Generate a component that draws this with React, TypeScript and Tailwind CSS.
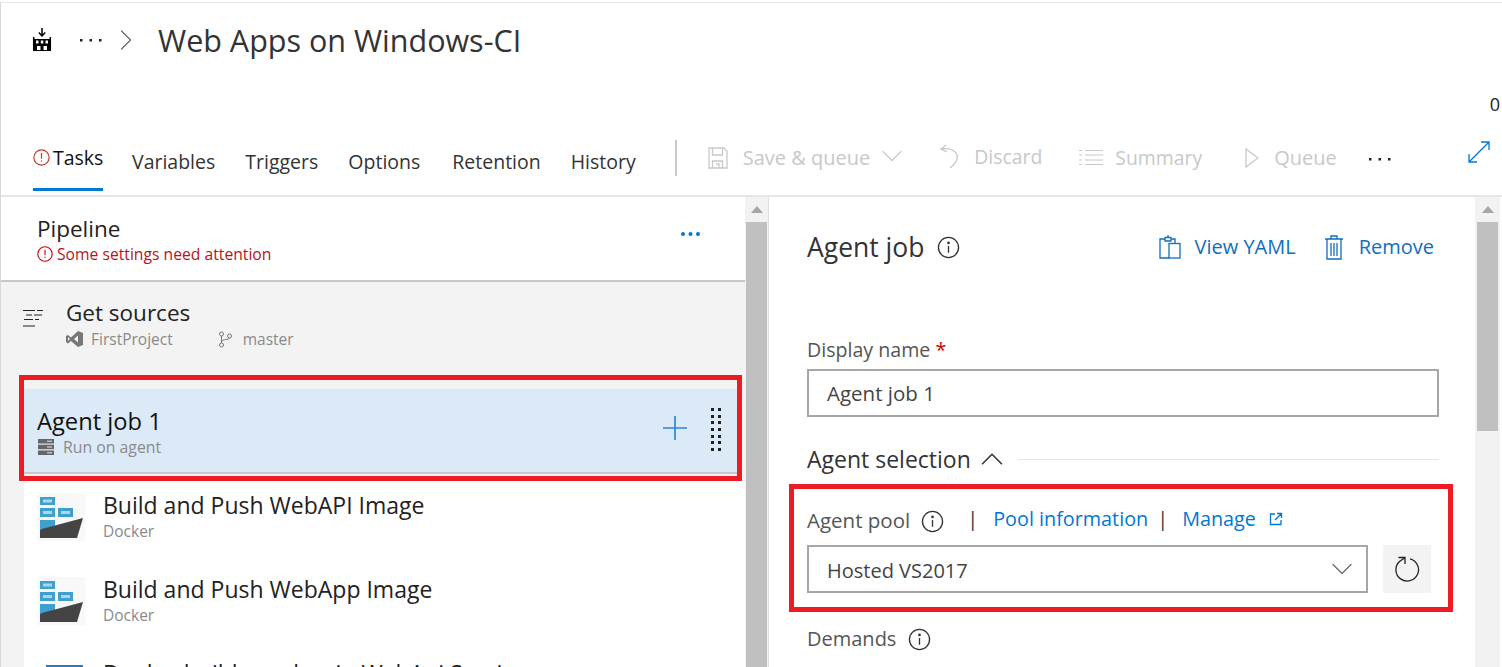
import { ChevronDown, ChevronUp, ChevronRight } from "lucide-react";

const font = { fontFamily: '"Open Sans", "Noto Sans", sans-serif' };

function Dots({ color = "#222" }: { color?: string }) {
  return (
    <svg width="24" height="6" viewBox="0 0 24 6" fill={color} className="shrink-0">
      <rect x="1" y="2" width="2.500" height="2.500" />
      <rect x="10.500" y="2" width="2.500" height="2.500" />
      <rect x="20" y="2" width="2.500" height="2.500" />
    </svg>
  );
}

function InfoIcon({ size = 23 }: { size?: number }) {
  return (
    <svg width={size} height={size} viewBox="0 0 24 24" fill="none" stroke="#333" strokeWidth="1.400" className="shrink-0">
      <circle cx="12" cy="12" r="10.500" />
      <path d="M12 10.500v7" />
      <circle cx="12" cy="7.200" r="0.700" fill="#333" />
    </svg>
  );
}

function WarnIcon({ size = 16, color = "#c00" }: { size?: number; color?: string }) {
  return (
    <svg width={size} height={size} viewBox="0 0 16 16" fill="none" stroke={color} strokeWidth="1.100" className="shrink-0">
      <circle cx="8" cy="8" r="7.200" />
      <path d="M8 3.800v5.400M8 10.800v1.200" />
    </svg>
  );
}

function BuildLogo() {
  return (
    <svg width="20" height="24" viewBox="0 0 20 24" className="shrink-0">
      <path d="M10 0v7.500M6.800 4.500l3.200 3.500 3.200-3.500" fill="none" stroke="#000" strokeWidth="1.500" />
      <path d="M1.700 9v13M18.300 9v13" stroke="#000" strokeWidth="1.500" />
      <rect x="1" y="11" width="18" height="12" fill="#000" />
      <rect x="4" y="12.500" width="2.500" height="3" fill="#fff" />
      <rect x="8.800" y="12.500" width="2.500" height="3" fill="#fff" />
      <rect x="13.500" y="12.500" width="2.500" height="3" fill="#fff" />
      <rect x="5" y="18" width="3.500" height="4" fill="#fff" />
      <rect x="11.500" y="18" width="3.500" height="4" fill="#fff" />
    </svg>
  );
}

function DockerIcon() {
  return (
    <svg width="48" height="48" viewBox="0 0 48 48" className="shrink-0">
      <rect width="48" height="48" fill="#f8f8f8" />
      <g fill="#3f9fcf">
        <rect x="3" y="4" width="15" height="8" />
        <rect x="3" y="15" width="15" height="9" />
        <rect x="21" y="15" width="15" height="9" />
        <rect x="3" y="27" width="15" height="9" />
      </g>
      <g fill="#a9d8ef">
        <rect x="6" y="6.500" width="9" height="3" />
        <rect x="6" y="18" width="9" height="3" />
        <rect x="24" y="18" width="9" height="3" />
      </g>
      <path d="M3 36.500 46 25l-6 20H3z" fill="#444" />
    </svg>
  );
}

function DeployIcon() {
  return (
    <svg width="48" height="48" viewBox="0 0 48 48" className="shrink-0">
      <rect x="9" y="4" width="37" height="40" fill="#2b78c8" />
    </svg>
  );
}

function GetSourcesIcon() {
  return (
    <svg width="22" height="19" viewBox="0 0 22 19" stroke="#222" strokeWidth="1.200" className="shrink-0">
      <path d="M1 1.500h12M15 1.500h6M4 6h6M12 6h8M2 10.500h9M13 10.500h4M1 17h12" />
    </svg>
  );
}

function VsIcon() {
  return (
    <svg width="17" height="16" viewBox="0 0 17 16" fill="#777" className="shrink-0">
      <path d="M12 0l5 2v12l-5 2-7-6-3 2.500L0 11V5l2-1 3 2.500zM12 4.500 8 8l4 3.500zM2 6v4l2-2z" fillRule="evenodd" />
    </svg>
  );
}

function BranchIcon() {
  return (
    <svg width="15" height="17" viewBox="0 0 15 17" fill="none" stroke="#777" strokeWidth="1" className="shrink-0">
      <circle cx="3.500" cy="3" r="2" />
      <circle cx="3.500" cy="14" r="2" />
      <circle cx="11.500" cy="5" r="2" />
      <path d="M3.500 5v7M3.500 11c0-3 8-2 8-4" />
    </svg>
  );
}

function ServerIcon() {
  return (
    <svg width="16" height="16" viewBox="0 0 16 16" fill="#666" className="shrink-0">
      <rect y="0" width="16" height="4.500" />
      <rect y="5.700" width="16" height="4.500" />
      <rect y="11.500" width="16" height="4.500" />
      <g fill="#dce9f7">
        <rect x="9" y="1.700" width="5" height="1" />
        <rect x="9" y="7.500" width="5" height="1" />
        <rect x="9" y="13.300" width="5" height="1" />
      </g>
    </svg>
  );
}

function SaveIcon() {
  return (
    <svg width="20" height="22" viewBox="0 0 20 22" fill="none" stroke="#c8c8c8" strokeWidth="1.300" className="shrink-0">
      <path d="M1 1h15l3 3v17H1z" />
      <path d="M4.500 1v7h10V1M4.500 21v-7h10v7M8 17h3v4" />
    </svg>
  );
}

function DiscardIcon() {
  return (
    <svg width="20" height="25" viewBox="0 0 20 25" fill="none" stroke="#c8c8c8" strokeWidth="1.300" className="shrink-0">
      <path d="M7 1 2 5l6 3M2 5c8-1 14 1 16 6 1 4-2 9-7 13" />
    </svg>
  );
}

function SummaryIcon() {
  return (
    <svg width="24" height="17" viewBox="0 0 24 17" stroke="#c8c8c8" strokeWidth="1.200" className="shrink-0">
      <path d="M6 1.500h18M6 6h18M6 11h18M6 15.500h18M0 1.500h3M0 6h3M0 11h3M0 15.500h3" />
    </svg>
  );
}

function QueueIcon() {
  return (
    <svg width="14" height="20" viewBox="0 0 14 20" fill="none" stroke="#c8c8c8" strokeWidth="1.300" className="shrink-0">
      <path d="M1 1l12 9-12 9z" />
    </svg>
  );
}

function ExpandIcon() {
  return (
    <svg width="24" height="24" viewBox="0 0 24 24" fill="none" stroke="#0078d4" strokeWidth="1.300" className="shrink-0">
      <path d="M2 22 22 2M14 2h8v8M2 14v8h8" />
    </svg>
  );
}

function YamlIcon() {
  return (
    <svg width="22" height="24" viewBox="0 0 22 24" fill="none" stroke="#106ebe" strokeWidth="1.300" className="shrink-0">
      <path d="M6 4H1v19h9M16 8V4h-4" />
      <path d="M6 2.500h6V6H6zM9 0v2.500" />
      <rect x="10" y="8.500" width="11" height="14.500" />
    </svg>
  );
}

function TrashIcon() {
  return (
    <svg width="20" height="25" viewBox="0 0 20 25" fill="none" stroke="#106ebe" strokeWidth="1.300" className="shrink-0">
      <path d="M1 4h18M7 4V1h6v3M3 4v20h14V4M7 8v13M10 8v13M13 8v13" />
    </svg>
  );
}

function RefreshIcon() {
  return (
    <svg width="26" height="26" viewBox="0 0 26 26" fill="none" stroke="#222" strokeWidth="1.300" className="shrink-0">
      <path d="M16 2.800A11.300 11.300 0 1 1 5.500 5.500L10.500 2" />
      <path d="M4.500 1.500h6.500V8" />
    </svg>
  );
}

function ScrollBar({ thumbHeight, width = "w-[23px]" }: { thumbHeight: string; width?: string }) {
  return (
    <div className={`flex shrink-0 flex-col items-center bg-[#f2f2f2] ${width}`}>
      <div className="flex h-[25px] w-full items-center justify-center">
        <div className="h-0 w-0 border-x-[6px] border-b-[7px] border-x-transparent border-b-[#a6a6a6]" />
      </div>
      <div className={`w-[21px] bg-[#c0c0c0] ${thumbHeight}`} />
    </div>
  );
}

function TaskRow({ name, sub, icon }: { name: string; sub: string; icon: React.ReactNode }) {
  return (
    <div className="flex h-[84px] gap-[18px] pl-[13px] pt-[12px]">
      {icon}
      <div className="-mt-[3px]">
        <div className="whitespace-nowrap text-[23px] leading-[30px] text-[#222]">{name}</div>
        <div className="text-[15.500px] leading-[22px] text-[#8a8a8a]">{sub}</div>
      </div>
    </div>
  );
}

export default function App() {
  return (
    <div className="h-[667px] w-[1502px] overflow-hidden bg-white pt-[2px]" style={font}>
      <div className="h-[665px] border-l border-t border-l-[#d8d8d8] border-t-[#e8e8e8]">
        <div className="flex h-[75px] items-center pb-[1px] pl-[31px]">
          <BuildLogo />
          <div className="ml-[27px]"><Dots /></div>
          <ChevronRight size={36} strokeWidth={0.800} className="ml-[5px] text-[#666]" />
          <h1 className="ml-[14px] text-[30.500px] leading-none text-[#333]">Web Apps on Windows-CI</h1>
        </div>

        <div className="relative h-[119px] border-b-2 border-[#e6e6e6] pb-[4px] pl-[32px]">
          <div className="absolute right-[2px] top-[13px] text-[18px] text-[#222]">0</div>
          <div className="flex h-full items-end">
            <div className="flex h-[69px] w-[70px] items-start gap-[3px] border-b-[3px] border-[#0078d4] pt-[21px]">
              <div className="pt-[6px]"><WarnIcon size={17} color="#c0392b" /></div>
              <span className="text-[19.500px] text-[#111]">Tasks</span>
            </div>
            <div className="flex h-[69px] items-start gap-[30px] pl-[29px] pt-[25px] text-[19.500px] text-[#333]">
              <span>Variables</span>
              <span>Triggers</span>
              <span>Options</span>
              <span className="ml-[2px]">Retention</span>
              <span>History</span>
            </div>
            <div className="mb-[15px] ml-[39px] h-[36px] w-[2px] bg-[#c8c8c8]" />
            <div className="flex h-[69px] items-start pl-[31px] pt-[20px] text-[20px] text-[#c8c8c8]">
              <div className="flex items-center gap-[15px] pt-[1px]">
                <SaveIcon />
                <span>Save &amp; queue</span>
              </div>
              <ChevronDown size={36} strokeWidth={0.800} className="ml-[4px] -mt-[4px]" />
              <div className="ml-[29px] flex items-center gap-[15px] text-[19.400px]"><DiscardIcon /><span>Discard</span></div>
              <div className="ml-[37px] flex items-center gap-[12px] pt-[1px] text-[19.400px]"><SummaryIcon /><span>Summary</span></div>
              <div className="ml-[43px] flex items-center gap-[15px] pt-[1px]"><QueueIcon /><span>Queue</span></div>
              <div className="ml-[31px] mt-[14px]"><Dots /></div>
              <div className="ml-[75px] -mt-[2px]"><ExpandIcon /></div>
            </div>
          </div>
        </div>

        <div className="flex h-[470px]">
          <div className="w-[744px] shrink-0">
            <div className="flex h-[85px] justify-between border-b-2 border-[#c8c8c8] pl-[36px] pr-[45px] pt-[17px]">
              <div>
                <div className="text-[22.500px] leading-[30px] text-[#222]">Pipeline</div>
                <div className="flex items-center gap-[4px] text-[15.700px] leading-[20px] text-[#b3141c]">
                  <WarnIcon />
                  Some settings need attention
                </div>
              </div>
              <svg width="19" height="4" viewBox="0 0 19 4" fill="#0078d4" className="mt-[18px]">
                <circle cx="2" cy="2" r="2" />
                <circle cx="9.500" cy="2" r="2" />
                <circle cx="17" cy="2" r="2" />
              </svg>
            </div>
            <div className="h-full bg-[#f3f3f3]">
              <div className="flex h-[93px] pl-[21px] pt-[16px]">
                <div className="pt-[11px]"><GetSourcesIcon /></div>
                <div className="pl-[22px]">
                  <div className="text-[22.500px] leading-[30px] text-[#222]">Get sources</div>
                  <div className="flex items-center text-[15.500px] leading-[22px] text-[#8a8a8a]">
                    <VsIcon />
                    <span className="ml-[8px]">FirstProject</span>
                    <span className="ml-[45px]"><BranchIcon /></span>
                    <span className="ml-[10px]">master</span>
                  </div>
                </div>
              </div>
              <div className="ml-[18px] mr-[3px] h-[106px] border-[5px] border-[#ed1c24] pt-[9px]">
                <div className="flex h-[85px] items-start justify-between border-b-2 border-[#c8c8c8] bg-[#dce9f7] pl-[13px] pr-[16px] pt-[17px]">
                  <div>
                    <div className="text-[23.700px] leading-[30px] text-[#111]">Agent job 1</div>
                    <div className="flex items-center gap-[9px] pl-[1px] text-[15.800px] leading-[22px] text-[#8a8a8a]">
                      <ServerIcon />
                      Run on agent
                    </div>
                  </div>
                  <div className="mt-[2px] flex items-start gap-[24px]">
                    <svg width="24" height="24" viewBox="0 0 24 24" stroke="#2b88d8" strokeWidth="1.700" className="mt-[8px]">
                      <path d="M0 12h24M12 0v24" />
                    </svg>
                    <div className="grid grid-cols-2 gap-x-[4px] gap-y-[3.700px]">
                      {Array.from({ length: 14 }).map((_, i) => (
                        <div key={i} className="h-[3px] w-[3px] bg-[#222]" />
                      ))}
                    </div>
                  </div>
                </div>
              </div>
              <div className="-mr-[3px] ml-[23px] h-[300px] bg-white">
                <TaskRow name="Build and Push WebAPI Image" sub="Docker" icon={<DockerIcon />} />
                <TaskRow name="Build and Push WebApp Image" sub="Docker" icon={<DockerIcon />} />
                <TaskRow name="Deploy build number in WebApi Service" sub="" icon={<DeployIcon />} />
              </div>
            </div>
          </div>

          <ScrollBar thumbHeight="h-[445px]" />
          <div className="w-[1px] shrink-0 bg-[#e0e0e0]" />

          <div className="w-[706px] shrink-0 pl-[38px] pr-[36px]">
            <div className="flex items-center justify-between pt-[32px]">
              <div className="flex items-center gap-[13px] text-[26.500px] leading-[36px] text-[#333]">
                Agent job
                <InfoIcon />
              </div>
              <div className="flex items-center pr-[5px] text-[20px] text-[#106ebe]">
                <YamlIcon />
                <span className="ml-[14px]">View YAML</span>
                <span className="ml-[28px]"><TrashIcon /></span>
                <span className="ml-[15px]">Remove</span>
              </div>
            </div>
            <div className="mt-[72px] text-[19.600px] leading-[26px] text-[#555]">
              Display name <span className="text-[#c00]">*</span>
            </div>
            <div className="mt-[6px] flex h-[48px] items-center border-2 border-[#a6a6a6] pl-[18px] pt-[1px] text-[20.500px] text-[#444]">
              Agent job 1
            </div>
            <div className="mt-[27px] flex h-[30px] items-center text-[23px] leading-[30px] text-[#333]">
              Agent selection
              <ChevronUp size={38} strokeWidth={1} className="-my-[4px] ml-[2px]" />
              <div className="ml-[7px] h-[1px] flex-1 bg-[#e6e6e6]" />
            </div>
            <div className="-ml-[18px] -mr-[14px] mt-[10px] h-[128px] border-[5px] border-[#ed1c24] pl-[13px] pr-[17px] pt-[18px]">
              <div className="flex items-center text-[20px] leading-[28px]">
                <span className="relative -top-[1px] text-[20.500px] text-[#555]">Agent pool</span>
                <span className="ml-[11px]"><InfoIcon /></span>
                <span className="relative -top-[2px] ml-[23px] text-[#333]">|</span>
                <span className="relative -top-[2px] ml-[15px] text-[19.800px] text-[#0078d4]">Pool information</span>
                <span className="relative -top-[2px] ml-[9px] text-[#333]">|</span>
                <span className="relative -top-[2px] ml-[14px] text-[19.800px] text-[#0078d4]">Manage</span>
                <svg width="14" height="14" viewBox="0 0 14 14" fill="none" stroke="#0078d4" strokeWidth="1.300" className="relative -top-[2px] ml-[13px]">
                  <path d="M6 2H1.500v10.500H12V8M8 1.500h4.500V6M12.500 1.500 6 8" />
                </svg>
              </div>
              <div className="mt-[10px] flex items-center gap-[15px]">
                <div className="flex h-[48px] flex-1 items-center justify-between border-2 border-[#a6a6a6] pl-[18px] pr-[6px] text-[20px] text-[#444]">
                  <span className="relative top-[2px]">Hosted VS2017</span>
                  <ChevronDown size={36} strokeWidth={0.800} className="text-[#666]" />
                </div>
                <div className="flex h-[48px] w-[48px] items-center justify-center bg-[#f3f3f3]">
                  <RefreshIcon />
                </div>
              </div>
            </div>
            <div className="mt-[13px] flex items-center gap-[12px] text-[20px] leading-[28px] text-[#555]">
              Demands
              <InfoIcon />
            </div>
          </div>

          <ScrollBar thumbHeight="h-[209px]" width="w-[25px]" />
        </div>
      </div>
    </div>
  );
}
